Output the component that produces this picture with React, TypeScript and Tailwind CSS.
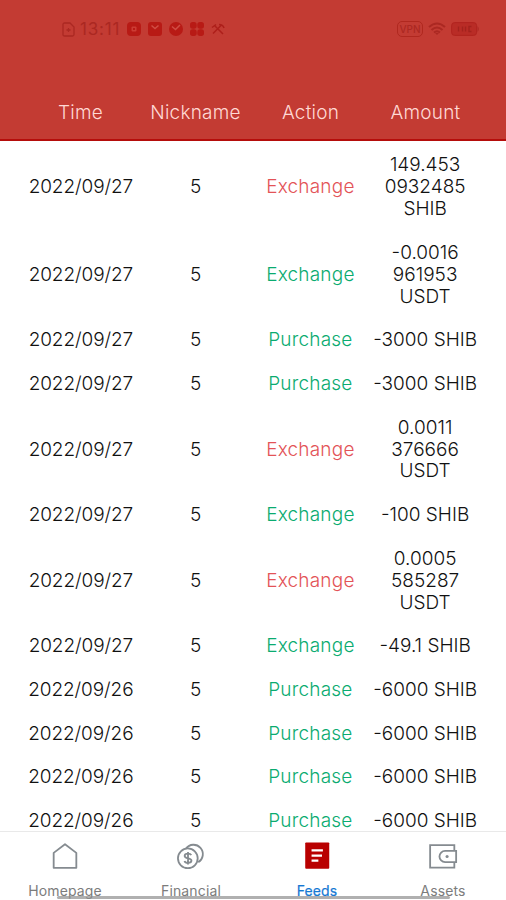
import { ReactNode } from "react";

const columns = ["Time", "Nickname", "Action", "Amount"];

const feeds = [
  { date: "2022/09/27", action: "Exchange", red: true, amount: ["149.453", "0932485", "SHIB"] },
  { date: "2022/09/27", action: "Exchange", red: false, amount: ["-0.0016", "961953", "USDT"] },
  { date: "2022/09/27", action: "Purchase", red: false, amount: ["-3000 SHIB"] },
  { date: "2022/09/27", action: "Purchase", red: false, amount: ["-3000 SHIB"] },
  { date: "2022/09/27", action: "Exchange", red: true, amount: ["0.0011", "376666", "USDT"] },
  { date: "2022/09/27", action: "Exchange", red: false, amount: ["-100 SHIB"] },
  { date: "2022/09/27", action: "Exchange", red: true, amount: ["0.0005", "585287", "USDT"] },
  { date: "2022/09/27", action: "Exchange", red: false, amount: ["-49.1 SHIB"] },
  { date: "2022/09/26", action: "Purchase", red: false, amount: ["-6000 SHIB"] },
  { date: "2022/09/26", action: "Purchase", red: false, amount: ["-6000 SHIB"] },
  { date: "2022/09/26", action: "Purchase", red: false, amount: ["-6000 SHIB"] },
  { date: "2022/09/26", action: "Purchase", red: false, amount: ["-6000 SHIB"] },
];

function StatusBar() {
  return (
    <div className="flex h-[58px] items-center justify-between pl-[62px] pr-[26px] text-[#ab2822]">
      <div className="flex items-center">
        <svg width="13" height="15" viewBox="0 0 13 15" fill="none" stroke="currentColor" strokeWidth="1.3">
          <path d="M1 2.5Q1 1 2.5 1H8l4 4v7.5Q12 14 10.500 14h-8Q1 14 1 12.500Z" />
          <path d="M4.500 8h4M6.500 6v4" />
        </svg>
        <span className="ml-[5px] w-[42px] text-[17px] leading-none tracking-[0.8px]">13:11</span>
        <svg className="ml-[5px]" width="101" height="16" viewBox="0 0 101 16" fill="#b81a15">
          <rect x="0" y="1" width="14" height="14" rx="4" />
          <rect x="4.500" y="5.500" width="5" height="5" rx="1" fill="#cc3c34" />
          <path d="M6 7h2v2H6Z" />
          <rect x="21" y="1" width="14" height="14" rx="3" />
          <path d="m24.500 4.500 3.500 3 3.500-3" fill="none" stroke="#d04d44" strokeWidth="1.500" />
          <circle cx="49" cy="8" r="7" />
          <path d="m45 5.500 3.500 3 4.500-4.500" fill="none" stroke="#d04d44" strokeWidth="1.500" />
          <rect x="63" y="1" width="6.700" height="6.700" rx="2.700" />
          <rect x="70.300" y="1" width="6.700" height="6.700" rx="2.700" />
          <rect x="63" y="8.300" width="6.700" height="6.700" rx="2.700" />
          <rect x="70.300" y="8.300" width="6.700" height="6.700" rx="2.700" />
          <path d="m86 12.500 8-8M87.500 4.500l8.500 8.500M85 6.500l4-3M92 3.500q4 0 5 3.500" fill="none" stroke="#ad1f1a" strokeWidth="1.500" />
        </svg>
      </div>
      <div className="flex items-center">
        <div className="flex h-4 w-[26px] items-center justify-center rounded-[5px] border-[1.5px] border-[#b0281f] text-[10px] font-medium leading-none">
          VPN
        </div>
        <svg className="ml-[5px]" width="18" height="14" viewBox="0 0 18 14" fill="none" stroke="currentColor" strokeWidth="2">
          <path d="M1 5Q9-2 17 5M3.500 8Q9 3 14.500 8M6 10.500Q9 8 12 10.500" />
          <path d="m7 11 2 2 2-2Z" fill="currentColor" stroke="none" />
        </svg>
        <svg className="ml-[5px]" width="29" height="14" viewBox="0 0 29 14">
          <rect x="0.600" y="0.600" width="25" height="12.800" rx="3" fill="#b92c26" stroke="#b1241f" />
          <path d="M26.500 4q2.500 3 0 6Z" fill="currentColor" />
          <path d="M7.500 4.500v5M11.500 4.500v5M14.500 4.500v5M20.500 4.500h-2.500v5h2.500" fill="none" stroke="#a3221d" strokeWidth="1.400" />
        </svg>
      </div>
    </div>
  );
}

function HomeIcon() {
  return (
    <svg width="32" height="32" viewBox="0 0 32 32" fill="none" stroke="#858b90" strokeWidth="2">
      <path d="M3.500 12 16 2.500 28.500 12v16.500h-25Z" strokeLinejoin="round" />
    </svg>
  );
}

function CoinsIcon() {
  return (
    <svg width="32" height="32" viewBox="0 0 32 32" fill="none" stroke="#858b90" strokeWidth="2">
      <path d="M10.500 7.200A10.300 10.300 0 1 1 24 22.200" />
      <circle cx="12.500" cy="18" r="10.900" />
      <path d="M16.300 14.600c-.6-1.300-2-1.800-3.600-1.800-2.200 0-3.700 1-3.700 2.600 0 3.700 7.500 1.500 7.500 5.100 0 1.600-1.600 2.600-3.700 2.600-2 0-3.500-.8-4-2.200M12.700 11.100v13.800" />
    </svg>
  );
}

function FeedsIcon() {
  return (
    <svg width="32" height="32" viewBox="0 0 32 32">
      <rect x="3" y="0.500" width="26.500" height="29" rx="1" fill="#b90000" />
      <path d="M10 9.300h12.500M10 15h11.500M10 20.500h7.500" stroke="#fff" strokeWidth="2.600" />
    </svg>
  );
}

function WalletIcon() {
  return (
    <svg width="32" height="32" viewBox="0 0 32 32" fill="none" stroke="#858b90" strokeWidth="2">
      <path d="M28.500 9.800V3.500H1.800v24.700h26.700v-6" />
      <path d="M30.500 9.800H18.300a6.200 6.200 0 0 0 0 12.400h12.200Z" />
      <circle cx="20.500" cy="16" r="1.700" fill="#858b90" stroke="none" />
    </svg>
  );
}

function Tab({ label, icon, active }: { label: string; icon: ReactNode; active?: boolean }) {
  return (
    <div className="flex flex-1 flex-col items-center pt-[10px]">
      {icon}
      <span
        className={`mt-[11px] text-[14px] leading-[18px] tracking-[0.15px] ${active ? "text-[#1578d3] [-webkit-text-stroke:0.2px_#1578d3]" : "text-[#7c7c7c]"}`}
      >
        {label}
      </span>
    </div>
  );
}

export default function App() {
  return (
    <div className="flex h-[900px] w-[506px] flex-col overflow-hidden bg-white font-['Inter',sans-serif]">
      <header className="h-[141px] shrink-0 border-b-2 border-[#b50d0b] bg-[#c33b33]">
        <StatusBar />
        <div className="grid grid-cols-4 px-[23px] pt-[42px] text-center text-[19px] font-light leading-[26px] tracking-[0.2px] text-[#ffd9d5]">
          {columns.map((column) => (
            <div key={column}>{column}</div>
          ))}
        </div>
      </header>

      <main className="min-h-0 flex-1 px-[23.500px] pt-[2.500px] text-[19px] font-light leading-[21.875px] text-[#111]">
        {feeds.map((feed, i) => (
          <div key={i} className="grid grid-cols-4 items-center py-[10.920px] text-center">
            <div className="whitespace-nowrap tracking-[-0.1px]">{feed.date}</div>
            <div>5</div>
            <div className={`tracking-[0.2px] ${feed.red ? "text-[#e35357]" : "text-[#0aab70]"}`}>{feed.action}</div>
            <div className="whitespace-nowrap">
              {feed.amount.map((line) => (
                <div key={line}>{line}</div>
              ))}
            </div>
          </div>
        ))}
      </main>

      <nav className="relative flex h-[69px] shrink-0 border-t border-[#e9e9e9] bg-white pl-[2px]">
        <Tab label="Homepage" icon={<HomeIcon />} />
        <Tab label="Financial" icon={<CoinsIcon />} />
        <Tab label="Feeds" icon={<FeedsIcon />} active />
        <Tab label="Assets" icon={<WalletIcon />} />
        <div className="absolute bottom-[1px] left-[57px] h-[3px] w-[393px] rounded-full bg-[#8e8e8e]/70" />
      </nav>
    </div>
  );
}
